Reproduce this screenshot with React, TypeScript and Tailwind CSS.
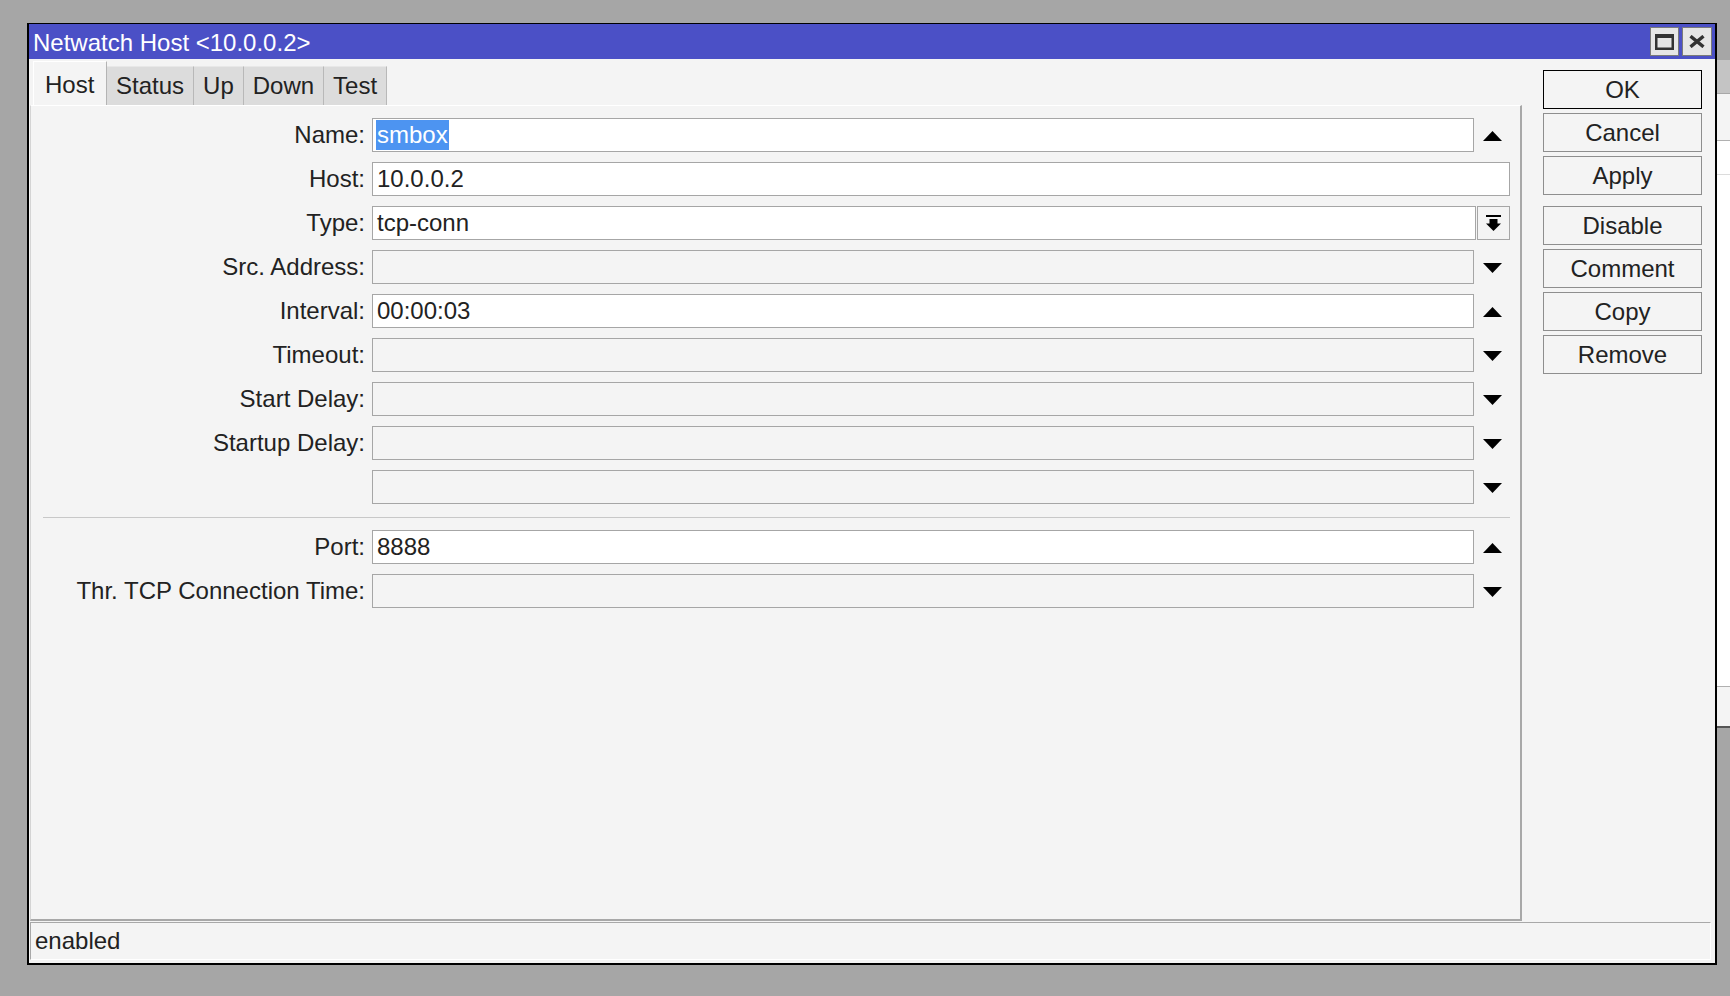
import React from "react";

type Kind = "up" | "down" | "none" | "select";
type Row = { label: string; value?: string; white?: boolean; kind: Kind; selected?: boolean };

const rows: Row[] = [
  { label: "Name:", value: "smbox", white: true, kind: "up", selected: true },
  { label: "Host:", value: "10.0.0.2", white: true, kind: "none" },
  { label: "Type:", value: "tcp-conn", white: true, kind: "select" },
  { label: "Src. Address:", kind: "down" },
  { label: "Interval:", value: "00:00:03", white: true, kind: "up" },
  { label: "Timeout:", kind: "down" },
  { label: "Start Delay:", kind: "down" },
  { label: "Startup Delay:", kind: "down" },
  { label: "", kind: "down" },
];

const rows2: Row[] = [
  { label: "Port:", value: "8888", white: true, kind: "up" },
  { label: "Thr. TCP Connection Time:", kind: "down" },
];

function Tri({ up }: { up: boolean }) {
  return (
    <svg width="19" height="10" viewBox="0 0 19 10" className="block">
      <polygon points={up ? "0,10 9.5,0 19,10" : "0,0 19,0 9.5,10"} fill="#000" />
    </svg>
  );
}

function FormRow({ r }: { r: Row }) {
  return (
    <div className="flex h-[34px] items-stretch">
      <div className="w-[334px] shrink-0 flex items-center justify-end text-[#222] whitespace-nowrap">
        {r.label}
      </div>
      <div
        className={`ml-[7px] flex-1 border border-[#a6a6a6] flex items-center pl-[3px] whitespace-nowrap overflow-hidden ${
          r.white ? "bg-white" : "bg-[#f4f4f4]"
        }`}
      >
        {r.value &&
          (r.selected ? (
            <span className="bg-[#4d94f1] text-white leading-[30px] px-[1px]">{r.value}</span>
          ) : (
            <span className="pl-[1px] text-[#222]">{r.value}</span>
          ))}
      </div>
      {(r.kind === "up" || r.kind === "down") && (
        <div className="w-[36px] shrink-0 flex items-center justify-center pt-[2px]">
          <Tri up={r.kind === "up"} />
        </div>
      )}
      {r.kind === "select" && (
        <div className="ml-[1px] w-[33px] shrink-0 border border-[#a6a6a6] bg-[#f4f4f4] flex items-center justify-center">
          <svg width="15" height="17" viewBox="0 0 15 17" className="block">
            <rect x="0" y="0" width="15" height="2" fill="#000" />
            <rect x="3.5" y="4" width="8" height="5" fill="#000" />
            <polygon points="0,8.5 15,8.5 7.5,16" fill="#000" />
          </svg>
        </div>
      )}
    </div>
  );
}

function Btn({ label, def }: { label: string; def?: boolean }) {
  return (
    <div
      className={`h-[39px] flex items-center justify-center bg-[#f4f4f4] border text-[#222] ${
        def ? "border-black" : "border-[#8e8e8e]"
      }`}
    >
      {label}
    </div>
  );
}

export default function App() {
  const tabs = ["Status", "Up", "Down", "Test"];
  return (
    <div className="relative w-[1730px] h-[996px] bg-[#a6a6a6] overflow-hidden font-['Liberation_Sans',Arial,sans-serif] text-[24px] leading-none">
      {/* window behind, partly visible at right edge */}
      <div className="absolute left-[1600px] top-[60px] w-[140px] h-[668px] bg-white border-b-2 border-[#555] flex flex-col">
        <div className="h-[34px] bg-[#c4c4c4] border-b border-[#a8a8a8]" />
        <div className="h-[47px] bg-[#f4f4f4] border-b border-[#b0b0b0]" />
        <div className="h-[34px] bg-white border-b border-[#dcdcdc]" />
        <div className="flex-1 bg-white" />
        <div className="h-[40px] bg-[#f4f4f4] border-t border-[#b0b0b0]" />
      </div>

      {/* main window */}
      <div className="absolute left-[27px] top-[23px] w-[1690px] h-[942px] border-t border-b-2 border-l-2 border-r-2 border-black flex flex-col bg-[#f4f4f4]">
        {/* title bar */}
        <div className="h-[35px] shrink-0 bg-[#4b50c6] flex items-center pl-[4px] pr-[3px]">
          <span className="text-white pt-[3px]">Netwatch Host &lt;10.0.0.2&gt;</span>
          <div className="ml-auto flex gap-[3px]">
            <div className="w-[29px] h-[29px] bg-[#e6e6e6] border border-[#7a7a7a] flex items-center justify-center">
              <svg width="19" height="16" viewBox="0 0 19 16" className="block">
                <rect x="1.25" y="2" width="16.5" height="12.75" fill="none" stroke="#333" strokeWidth="2.5" />
                <rect x="0" y="0" width="19" height="4" fill="#333" />
              </svg>
            </div>
            <div className="w-[30px] h-[29px] bg-[#e6e6e6] border border-[#7a7a7a] flex items-center justify-center">
              <svg width="16" height="13" viewBox="0 0 16 13" className="block">
                <path d="M1.5 1.2 L14.5 11.8 M14.5 1.2 L1.5 11.8" stroke="#333" strokeWidth="3.4" strokeLinecap="butt" />
              </svg>
            </div>
          </div>
        </div>

        {/* body */}
        <div className="flex-1 flex flex-col pl-[1px] pr-[4px] pb-[3px]">
          <div className="flex-1 flex min-h-0">
            {/* left: tabs + panel */}
            <div className="w-[1492px] shrink-0 flex flex-col pt-[2px]">
              <div className="h-[44px] shrink-0 flex items-end pl-[3px]">
                <div className="h-[44px] w-[74px] bg-[#f4f4f4] border-l border-t border-white border-r border-r-[#b4b4b4] flex items-start pt-[11px] pl-[11px] text-[#222]">
                  Host
                </div>
                {tabs.map((t) => (
                  <div
                    key={t}
                    className="h-[39px] bg-[#dcdcdc] border-t border-[#e8e8e8] border-r border-r-[#b8b8b8] flex items-center justify-center px-[9px] text-[#222]"
                  >
                    {t}
                  </div>
                ))}
              </div>
              <div className="flex-1 border-t border-t-white border-l border-l-[#d4d4d4] border-r-2 border-r-[#a8a8a8] border-b-2 border-b-[#a8a8a8] pt-[12px] pr-[10px] flex flex-col">
                <div className="flex flex-col gap-[10px]">
                  {rows.map((r, i) => (
                    <FormRow key={i} r={r} />
                  ))}
                </div>
                <div className="ml-[12px] mt-[13px] h-px bg-[#c8c8c8]" />
                <div className="mt-[12px] flex flex-col gap-[10px]">
                  {rows2.map((r, i) => (
                    <FormRow key={i} r={r} />
                  ))}
                </div>
              </div>
            </div>
            {/* right buttons */}
            <div className="ml-[21px] w-[159px] shrink-0 pt-[11px] flex flex-col">
              <div className="flex flex-col gap-[4px]">
                <Btn label="OK" def />
                <Btn label="Cancel" />
                <Btn label="Apply" />
              </div>
              <div className="mt-[11px] flex flex-col gap-[4px]">
                <Btn label="Disable" />
                <Btn label="Comment" />
                <Btn label="Copy" />
                <Btn label="Remove" />
              </div>
            </div>
          </div>
          {/* status bar */}
          <div className="h-[38px] shrink-0 mt-[1px] border-t border-l border-[#a8a8a8] border-b border-b-white border-r border-r-white flex items-center pl-[4px] text-[#222]">
            enabled
          </div>
        </div>
      </div>
    </div>
  );
}
